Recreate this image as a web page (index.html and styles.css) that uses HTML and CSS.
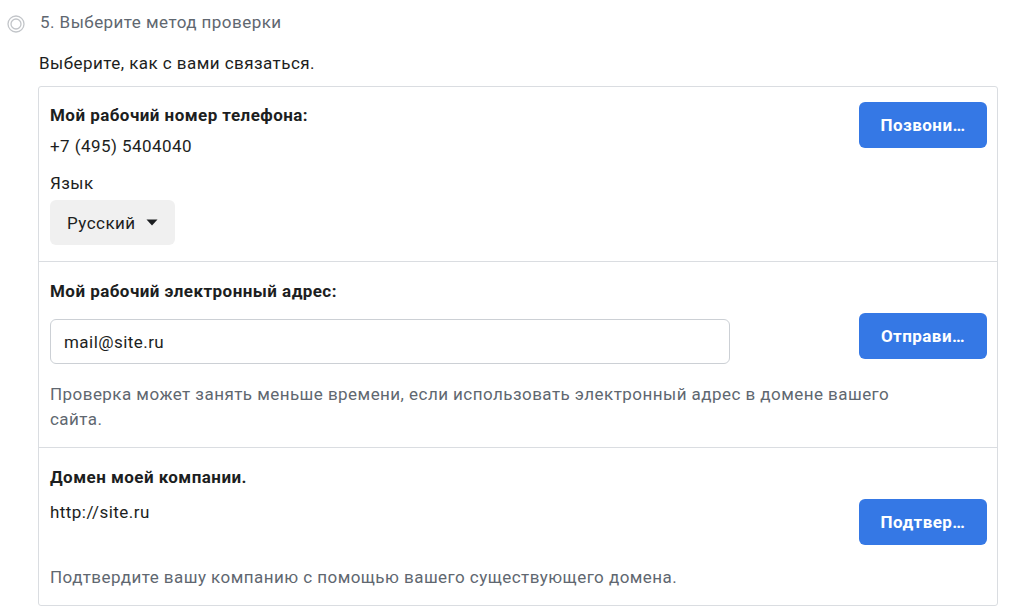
FILE: index.html
```html
<!DOCTYPE html>
<html lang="ru">
<head>
<meta charset="utf-8">
<title>Выберите метод проверки</title>
<link rel="stylesheet" href="styles.css">
</head>
<body>
<div class="step">
  <div class="step-head">
    <svg class="radio" width="18" height="18" viewBox="0 0 18 18" aria-hidden="true">
      <circle cx="9" cy="9" r="8" fill="none" stroke="#c2c5c9" stroke-width="1.3"/>
      <circle cx="9" cy="9" r="5" fill="none" stroke="#c2c5c9" stroke-width="1.3"/>
    </svg>
    <span class="step-title">5. Выберите метод проверки</span>
  </div>
  <div class="step-body">
    <p class="lead">Выберите, как с вами связаться.</p>
    <div class="methods">
      <div class="method method-phone">
        <div class="method-top">
          <div class="method-main">
            <div class="method-title">Мой рабочий номер телефона:</div>
            <div class="value">+7 (495) 5404040</div>
            <div class="label">Язык</div>
            <button class="select" type="button">Русский
              <svg class="caret" width="12" height="7" viewBox="0 0 12 7" aria-hidden="true"><path d="M0.5 0.5 H11.5 L6 6.5 Z" fill="#1c1e21"/></svg>
            </button>
          </div>
          <button class="action action-first" type="button">Позвони…</button>
        </div>
      </div>
      <div class="method">
        <div class="method-top">
          <div class="method-main">
            <div class="method-title">Мой рабочий электронный адрес:</div>
            <div class="input">mail@site.ru</div>
          </div>
          <button class="action" type="button">Отправи…</button>
        </div>
        <p class="help">Проверка может занять меньше времени, если использовать электронный адрес в домене вашего сайта.</p>
      </div>
      <div class="method">
        <div class="method-top">
          <div class="method-main">
            <div class="method-title">Домен моей компании.</div>
            <div class="value value-domain">http://site.ru</div>
          </div>
          <button class="action" type="button">Подтвер…</button>
        </div>
        <p class="help help-last">Подтвердите вашу компанию с помощью вашего существующего домена.</p>
      </div>
    </div>
  </div>
</div>
</body>
</html>
```

FILE: styles.css
```css
* { box-sizing: border-box; }

html, body {
  margin: 0;
  padding: 0;
  background: #ffffff;
}

body {
  font-family: Roboto, "Liberation Sans", Arial, sans-serif;
  font-size: 17px;
  letter-spacing: 0.45px;
  line-height: 20px;
  color: #1c1e21;
}

.step-head {
  display: flex;
  align-items: center;
  padding: 12px 0 0 7px;
  height: 32px;
}

.radio {
  flex: none;
  margin-top: 3px;
}

.step-title {
  margin-left: 15px;
  color: #606770;
}

.step-body {
  padding: 0 26px 0 38px;
}

.lead {
  margin: 21px 0 13px 1px;
}

.methods {
  border: 1px solid #dadde1;
  border-radius: 3px;
  width: 960px;
}

.method {
  padding: 15px 10px 15px 11px;
  border-top: 1px solid #dadde1;
}

.method:first-child {
  border-top: none;
}

.method-phone {
  padding-bottom: 16px;
}

.method-top {
  display: flex;
  align-items: flex-start;
}

.method-main {
  flex: 1;
  min-width: 0;
}

.method-title {
  font-weight: 700;
  margin-top: 4px;
}

.method-phone .method-title {
  margin-top: 3px;
}

.value {
  margin-top: 11px;
}

.value-domain {
  margin-top: 15px;
}

.label {
  margin-top: 17px;
}

.select {
  display: flex;
  align-items: center;
  margin-top: 7px;
  width: 125px;
  height: 45px;
  padding: 0 0 0 17px;
  border: none;
  border-radius: 6px;
  background: #f0f0f0;
  font: inherit;
  letter-spacing: inherit;
  color: #1c1e21;
  cursor: pointer;
}

.caret {
  margin-left: 10px;
}

.input {
  margin-top: 18px;
  width: 680px;
  height: 45px;
  padding: 0 13px;
  display: flex;
  align-items: center;
  border: 1px solid #ccd0d5;
  border-radius: 6px;
}

.action {
  flex: none;
  width: 128px;
  height: 46px;
  margin-top: 36px;
  border: none;
  border-radius: 6px;
  background: #3578e5;
  color: #ffffff;
  font: inherit;
  font-weight: 700;
  letter-spacing: inherit;
  cursor: pointer;
}

.action-first {
  margin-top: 0;
}

.help {
  margin: 18px 0 0;
  max-width: 870px;
  line-height: 25px;
  color: #606770;
}

.help-last {
  margin-top: 20px;
}
```
